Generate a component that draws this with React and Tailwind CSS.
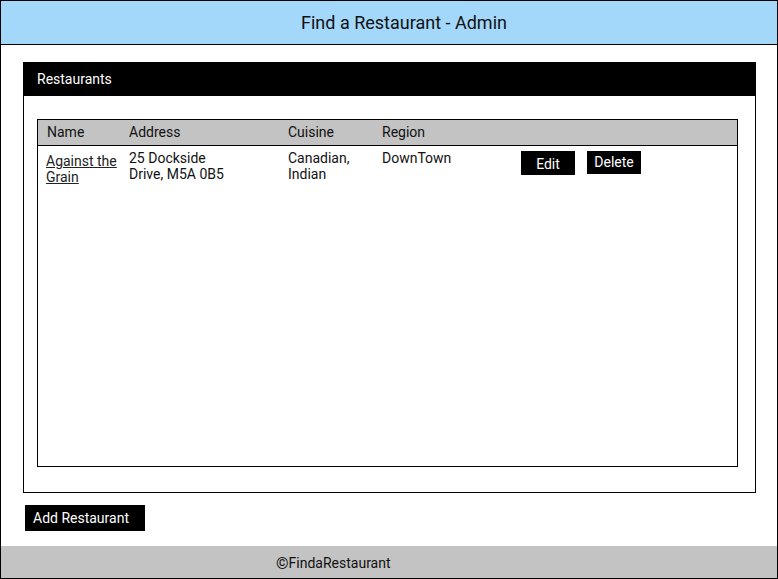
import React from "react";

const restaurants = [
  {
    name: ["Against the", "Grain"],
    address: ["25 Dockside", "Drive, M5A 0B5"],
    cuisine: ["Canadian,", "Indian"],
    region: "DownTown",
  },
];

export default function App() {
  return (
    <div
      className="w-[778px] h-[579px] border border-black flex flex-col bg-white text-[#111]"
      style={{ fontFamily: "Roboto, 'Liberation Sans', sans-serif" }}
    >
      {/* Top bar */}
      <div className="h-[44px] shrink-0 bg-[#a4d8fb] border-b border-black flex items-center justify-center pl-[30px] text-[18px]">
        Find a Restaurant - Admin
      </div>

      {/* Restaurants panel */}
      <div className="ml-[22px] mr-[21px] mt-[17px] border border-black border-t-0 h-[431px] flex flex-col">
        <div className="h-[34px] shrink-0 bg-black text-white text-[14px] flex items-center pl-[13px]">
          Restaurants
        </div>
        <div className="mt-[23px] ml-[13px] w-[701px] h-[348px] border border-black flex flex-col text-[14px] leading-[16px]">
          <div className="h-[26px] shrink-0 bg-[#c3c3c3] border-b border-black grid grid-cols-[82px_159px_94px_139px_66px_1fr] items-center pb-[2px]">
            <div className="pl-[9px]">Name</div>
            <div className="pl-[9px]">Address</div>
            <div className="pl-[9px]">Cuisine</div>
            <div className="pl-[9px]">Region</div>
            <div></div>
            <div></div>
          </div>
          {restaurants.map((r, i) => (
            <div key={i} className="grid grid-cols-[82px_159px_94px_139px_66px_1fr] items-start">
              <div className="pl-[8px] pt-[7px]">
                <a href="#" className="underline text-[#222]">
                  {r.name[0]}
                  <br />
                  {r.name[1]}
                </a>
              </div>
              <div className="pl-[9px] pt-[4px]">
                {r.address[0]}
                <br />
                {r.address[1]}
              </div>
              <div className="pl-[9px] pt-[4px]">
                {r.cuisine[0]}
                <br />
                {r.cuisine[1]}
              </div>
              <div className="pl-[9px] pt-[4px]">{r.region}</div>
              <div className="pl-[9px] pt-[5px]">
                <button className="w-[54px] h-[24px] bg-black text-white flex items-center justify-center pt-[2px]">
                  Edit
                </button>
              </div>
              <div className="pl-[9px] pt-[5px]">
                <button className="w-[54px] h-[23px] bg-black text-white flex items-center justify-center pb-[2px]">
                  Delete
                </button>
              </div>
            </div>
          ))}
        </div>
      </div>

      {/* Add button */}
      <div className="ml-[24px] mt-[12px]">
        <button className="w-[120px] h-[26px] bg-black text-white text-[14px] text-left pl-[8px]">
          Add Restaurant
        </button>
      </div>

      {/* Footer */}
      <div className="mt-auto h-[32px] shrink-0 bg-[#c3c3c3] flex items-center pl-[275px] pt-[3px] text-[14px]">
        <span className="text-[16px] leading-none">©</span>FindaRestaurant
      </div>
    </div>
  );
}
